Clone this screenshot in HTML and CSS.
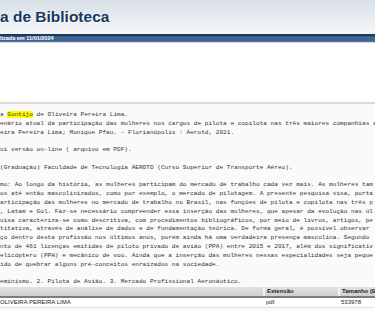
FILE: index.html
```html
<!DOCTYPE html>
<html lang="pt-BR">
<head>
  <meta charset="UTF-8" />
  <meta name="viewport" content="width=device-width, initial-scale=1.0" />
  <title>Sistema de Biblioteca</title>
  <link rel="stylesheet" href="styles.css">
</head>
<body>

  <!-- Cabecalho -->
  <div class="cabecalho">
    <div class="titulo">a de Biblioteca</div>
  </div>
  <div class="faixa">
    <span class="atualizada">lizada em 11/01/2024</span>
  </div>
  <div class="espaco"></div>

  <!-- Registro -->
  <div class="conteudo">
<pre class="registro">a <span class="destaque">Gontijo</span> de Oliveira Pereira Lima.
enário atual da participação das mulheres nos cargos de pilota e copilota nas três maiores companhias aéreas
eira Pereira Lima; Monique Pfau. – Florianópolis : Aerotd, 2021.

ui versão on-line ( arquivo em PDF).

(Graduação) Faculdade de Tecnologia AEROTD (Curso Superior de Transporte Aéreo).

mo: Ao longo da história, as mulheres participam do mercado de trabalho cada vez mais. As mulheres tam
os até então masculinizados, como por exemplo, o mercado de pilotagem. A presente pesquisa visa, porta
articipação das mulheres no mercado de trabalho no Brasil, nas funções de pilota e copilota nas três p
, Latam e Gol. Faz-se necessário compreender essa inserção das mulheres, que apesar da evolução nas úl
uisa caracteriza-se como descritiva, com procedimentos bibliográficos, por meio de livros, artigos, pe
titativa, através de análise de dados e de fundamentação teórica. De forma geral, é possível observar
ço dentro desta profissão nos últimos anos, porém ainda há uma verdadeira presença masculina. Segundo
nto de 461 licenças emitidas de piloto privado de avião (PPA) entre 2015 e 2017, além dos significativ
elicóptero (PPH) e mecânico de voo. Ainda que a inserção das mulheres nessas especialidades seja peque
ido de quebrar alguns pré-conceitos enraizados na sociedade.

eminismo. 2. Pilota de Avião. 3. Mercado Profissional Aeronáutico.</pre>

    <!-- Arquivos -->
    <table class="arquivos">
      <tr>
        <th class="col-nome"></th>
        <th class="col-ext">Extensão</th>
        <th class="col-tam">Tamanho (Bytes)</th>
      </tr>
      <tr>
        <td class="nome">OLIVEIRA PEREIRA LIMA</td>
        <td>pdf</td>
        <td>533978</td>
      </tr>
    </table>
  </div>

</body>
</html>
```

FILE: styles.css
```css
body {
  font-family: "Liberation Sans", Arial, sans-serif;
  background-color: #fafafa;
  margin: 0;
  padding: 0;
  overflow: hidden;
}

/* Cabecalho com titulo */
.cabecalho {
  height: 34px;
  background: linear-gradient(#d9e0e8, #f4f6f8);
  display: flex;
  align-items: center;
}

.titulo {
  font-size: 15.5px;
  font-weight: bold;
  color: #173763;
  text-shadow: 1px 1px 0 #fff;
  white-space: nowrap;
}

.faixa {
  height: 8px;
  background: linear-gradient(#1b3963 0, #1b3963 2px, #4b6e9a 3px, #3a5d8b 6px, #5a7aa3 8px);
  border-bottom: 1px solid #cfd7e2;
  display: flex;
  align-items: center;
}

.atualizada {
  font-size: 5.5px;
  font-weight: bold;
  color: #fff;
  white-space: nowrap;
}

.espaco {
  height: 59px;
  background-color: #fff;
  border-bottom: 2px solid #dadada;
}

.conteudo {
  background-color: #fafafa;
}

.registro {
  font-family: "Liberation Mono", "Courier New", monospace;
  font-size: 6.1px;
  line-height: 8.8px;
  color: #333;
  margin: 0;
  padding-top: 7px;
  white-space: pre;
}

.destaque {
  background-color: #ffff00;
}

.arquivos {
  border-collapse: collapse;
  width: 420px;
  margin-top: 0;
  font-size: 6px;
  color: #222;
}

.arquivos th {
  background: linear-gradient(#e2e2e2, #cfcfcf);
  height: 9px;
  padding: 0 2px;
  text-align: left;
  font-weight: bold;
  border-right: 2px solid #f2f2f2;
  border-bottom: 2px solid #7c7c7c;
}

.arquivos td {
  background-color: #fff;
  height: 9px;
  padding: 0 2px;
  border-bottom: 1px solid #e2e2e2;
}

.arquivos .nome {
  padding-left: 0;
}

.col-nome {
  width: 259px;
}

.col-ext {
  width: 69px;
}
```
